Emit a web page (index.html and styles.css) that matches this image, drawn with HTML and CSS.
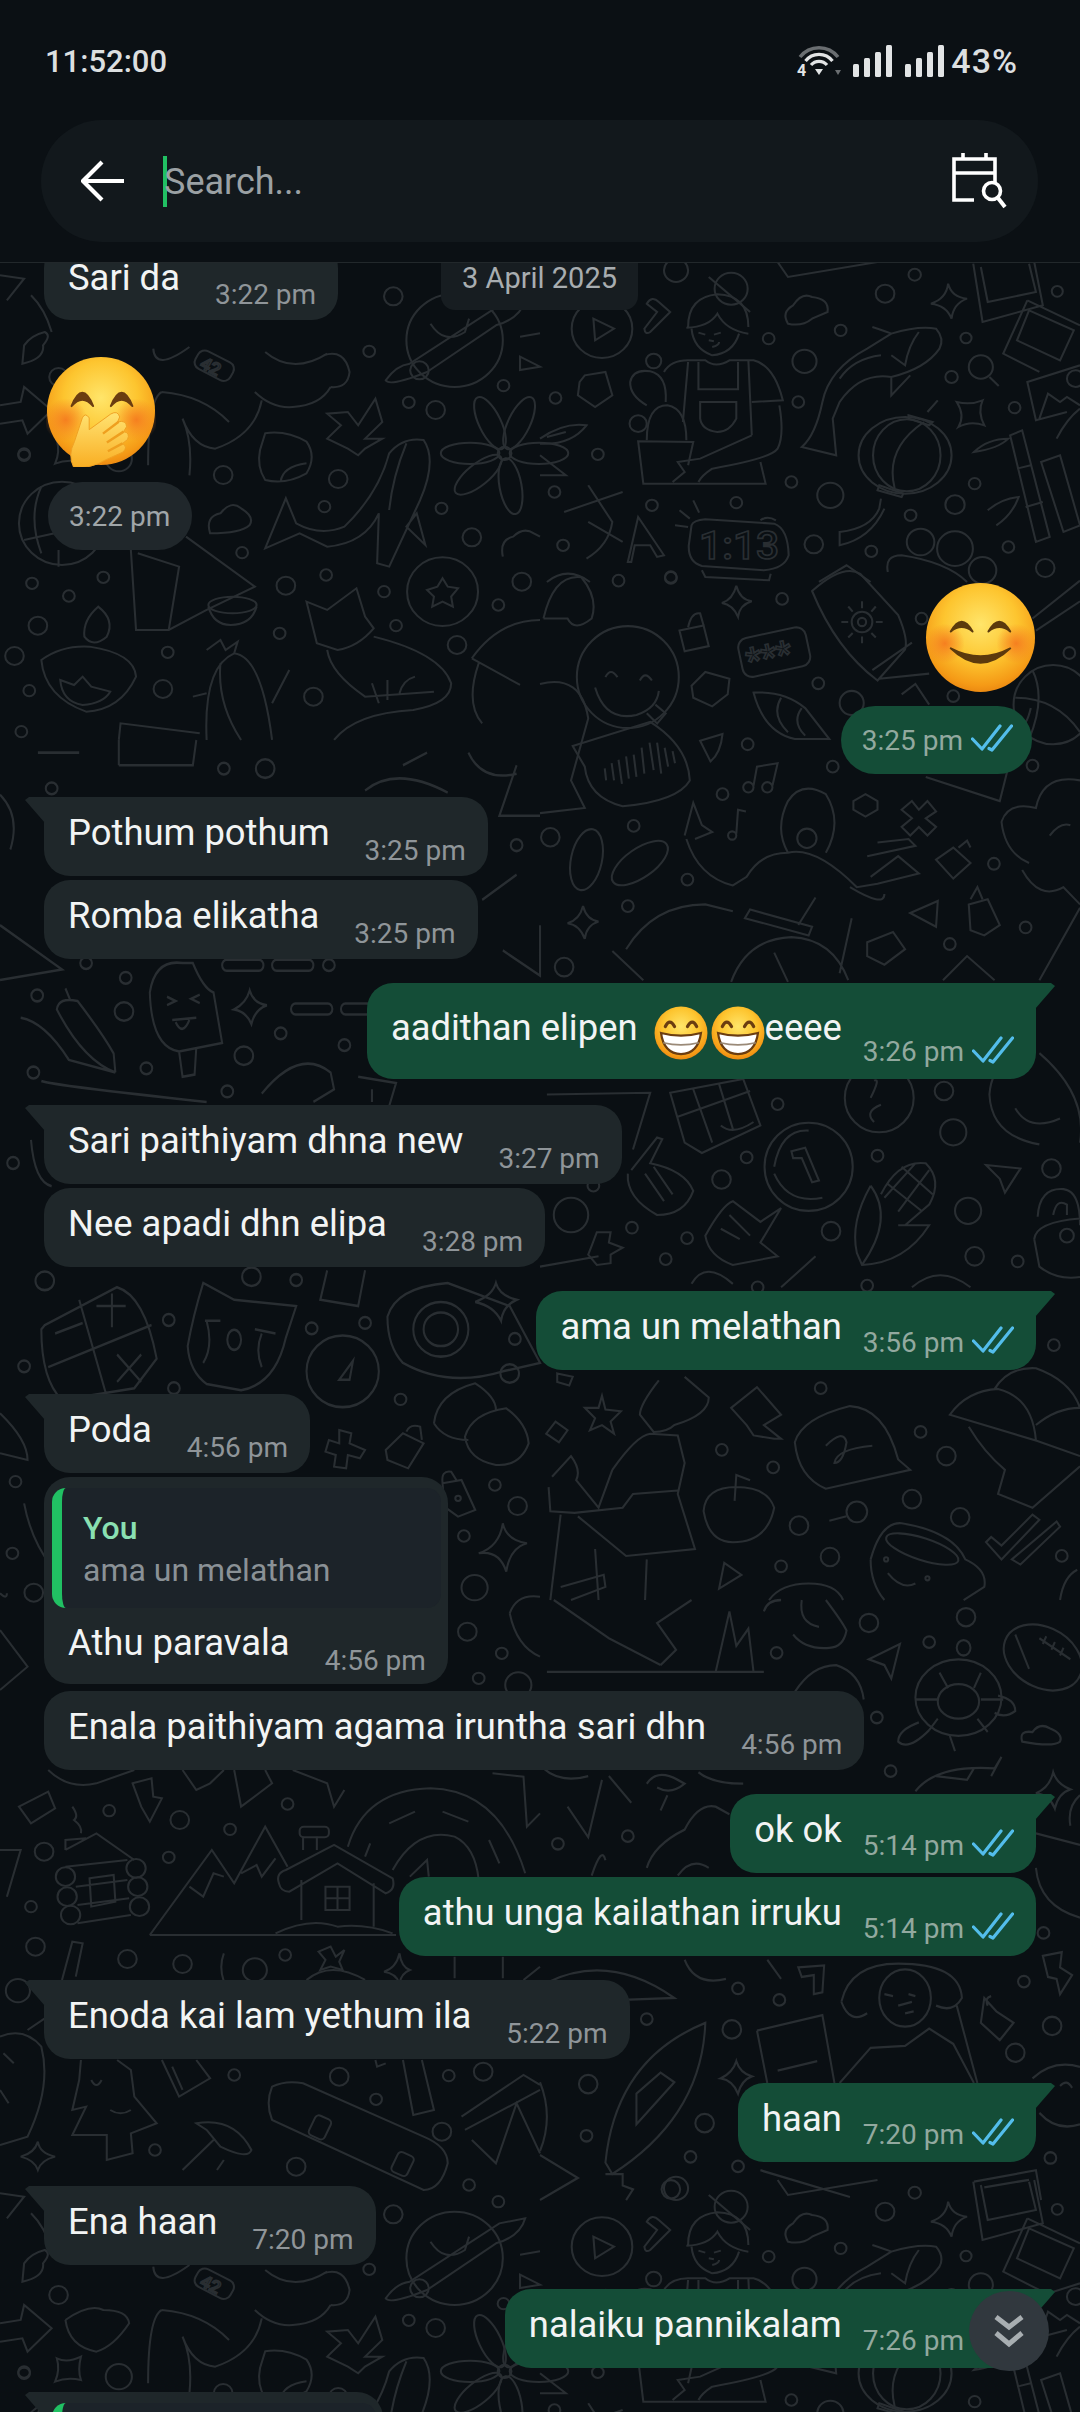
FILE: index.html
```html
<!DOCTYPE html>
<html>
<head>
<meta charset="utf-8">
<title>Chat search</title>
<link rel="stylesheet" href="styles.css">
</head>
<body>
<svg width="0" height="0" class="defs">
	<defs>
		<radialGradient id="faceFill" cx="50%" cy="38%" r="62%">
			<stop offset="0" stop-color="#ffe56a"/>
			<stop offset=".55" stop-color="#fdc52f"/>
			<stop offset=".9" stop-color="#f59a16"/>
			<stop offset="1" stop-color="#ec8a12"/>
		</radialGradient>
		<radialGradient id="blush" cx="50%" cy="50%" r="50%">
			<stop offset="0" stop-color="#f57c1f" stop-opacity=".95"/>
			<stop offset="1" stop-color="#f57c1f" stop-opacity="0"/>
		</radialGradient>
		<linearGradient id="handFill" x1="0" y1="0" x2="0" y2="1">
			<stop offset="0" stop-color="#ffe372"/>
			<stop offset="1" stop-color="#f9ae23"/>
		</linearGradient>
		<symbol id="ticks" viewBox="0 0 42 28">
			<path d="M1.5 15 L11 25 L29 2 M18 24.500 L21 26 L40.500 2" fill="none" stroke="#53bdeb" stroke-width="3.200" stroke-linecap="round" stroke-linejoin="round"/>
		</symbol>
		<symbol id="grin" viewBox="0 0 100 100">
			<circle cx="50" cy="50" r="49" fill="url(#faceFill)"/>
			<path d="M21 38 Q29 22 38 38 M62 38 Q71 22 79 38" fill="none" stroke="#6b3d10" stroke-width="6" stroke-linecap="round"/>
			<path d="M13 50 Q50 60 87 50 Q82 88 50 89 Q18 88 13 50 Z" fill="#fff" stroke="#6b3d10" stroke-width="4"/>
			<path d="M17 68 Q50 76 83 68" fill="none" stroke="#9a8a78" stroke-width="3"/>
		</symbol>
	</defs>
</svg>

<div class="phone">
	<header class="top">
		<div class="statusbar">
			<span class="clock">11:52:00</span>
			<div class="status-icons">
				<svg class="ic-wifi" width="45" height="32" viewBox="0 0 45 32">
					<path d="M3 12 A24 24 0 0 1 41 12" fill="none" stroke="#6a6e71" stroke-width="3.500"/>
					<path d="M8.500 16 A17 17 0 0 1 35.500 16" fill="none" stroke="#e2e4e5" stroke-width="3.200"/>
					<path d="M14 20 A10.500 10.500 0 0 1 30 20" fill="none" stroke="#e2e4e5" stroke-width="3.200"/>
					<path d="M18 24 L26 24 L22 30 Z" fill="#e2e4e5"/>
					<text class="wifi-four" x="0" y="31">4</text>
					<path d="M38 25 L44 25 L41 30 Z" fill="#6a6e71"/>
				</svg>
				<svg class="ic-signal" width="40" height="32" viewBox="0 0 40 32">
					<rect x="0" y="19" width="6" height="13" rx="1.500"/>
					<rect x="11" y="13" width="6" height="19" rx="1.500"/>
					<rect x="22" y="7" width="6" height="25" rx="1.500"/>
					<rect x="33" y="0" width="6" height="32" rx="1.500"/>
				</svg>
				<svg class="ic-signal" width="40" height="32" viewBox="0 0 40 32">
					<rect x="0" y="19" width="6" height="13" rx="1.500"/>
					<rect x="11" y="13" width="6" height="19" rx="1.500"/>
					<rect x="22" y="7" width="6" height="25" rx="1.500"/>
					<rect x="33" y="0" width="6" height="32" rx="1.500"/>
				</svg>
				<span class="battery">43%</span>
			</div>
		</div>
		<div class="searchbar">
			<svg class="back" width="44" height="42" viewBox="0 0 44 42">
				<path d="M43 21 H3 M21 2 L2 21 L21 40" fill="none" stroke="#fff" stroke-width="4.200"/>
			</svg>
			<span class="cursor"></span>
			<span class="placeholder">Search...</span>
			<svg class="calendar" width="56" height="56" viewBox="0 0 56 56">
				<path d="M11 0 V6 M34 0 V6 M2 20 H43 M43 30 V6 H2 V47 H22" fill="none" stroke="#fff" stroke-width="3.600"/>
				<circle cx="40" cy="38" r="8.500" fill="none" stroke="#fff" stroke-width="3.600"/>
				<path d="M46 45 L53 54" fill="none" stroke="#fff" stroke-width="4"/>
			</svg>
		</div>
	</header>

	<main class="chat">
		<svg class="wallpaper" width="1080" height="2149" viewBox="0 263 1080 2149">
			<g id="tile">
				<!-- top right, woman with cactus, koi, lantern -->
				<g transform="translate(540 262) scale(.3444 .3333)">
					<circle cx="395" cy="25" r="35"/><circle cx="1088" cy="38" r="18"/><circle cx="1002" cy="95" r="27"/><circle cx="1502" cy="88" r="16"/><circle cx="873" cy="205" r="17"/><circle cx="664" cy="230" r="17"/><circle cx="768" cy="298" r="35"/><circle cx="1237" cy="228" r="16"/><circle cx="1195" cy="345" r="18"/><circle cx="750" cy="420" r="17"/><circle cx="1378" cy="437" r="17"/><circle cx="45" cy="408" r="17"/><circle cx="168" cy="577" r="17"/><circle cx="42" cy="690" r="17"/><circle cx="730" cy="660" r="17"/><circle cx="843" cy="700" r="38"/><circle cx="1262" cy="665" r="17"/><circle cx="1205" cy="728" r="28"/><circle cx="325" cy="730" r="17"/><circle cx="570" cy="722" r="17"/><circle cx="1076" cy="760" r="17"/><circle cx="67" cy="850" r="17"/><circle cx="795" cy="847" r="27"/><circle cx="962" cy="868" r="17"/><circle cx="1360" cy="855" r="17"/><circle cx="1467" cy="918" r="27"/><circle cx="380" cy="945" r="17"/>
					<circle cx="180" cy="200" r="88"/><path d="M155 170 L215 200 L160 235 Z"/>
					<path d="M310 125 Q325 100 345 120 L378 150 L320 210 Q305 220 303 200 L340 150 Z"/>
					<circle cx="555" cy="80" r="48"/><path d="M490 45 L610 150"/>
					<path d="M430 195 Q430 105 515 97 Q605 100 605 195 M425 197 Q490 195 515 155 Q540 205 605 215 M440 200 Q445 260 500 280 Q560 275 578 215 M460 212 L480 218 M525 212 L505 218 M490 235 L505 238 M500 255 Q520 250 520 240"/>
					<path d="M360 330 Q380 295 430 295 L480 295 Q510 320 550 295 L620 295 Q680 310 705 415 L615 420 M430 300 L415 480 M605 295 L615 520 M460 300 L460 382 L575 382 L575 300 M465 420 L570 420 L570 470 Q550 510 515 510 Q470 505 465 470 Z M615 520 L465 590 L400 600 L420 630 L385 660 M695 430 Q710 520 690 560 Q670 590 500 620 Q470 640 460 660 M640 600 L655 665 L300 665 L285 538 L445 540 L430 610"/>
					<path d="M310 535 Q310 430 370 430 Q425 440 425 535 M310 430 Q260 400 262 360 Q270 320 320 328 Q370 340 365 420"/><circle cx="330" cy="297" r="22"/><circle cx="285" cy="485" r="25"/>
					<path d="M115 360 L130 340 L190 330 L210 400 L160 435 L110 400 Z M0 530 Q70 480 135 490 Q90 550 0 545 M20 525 L75 510 M0 580 L75 640 L0 640"/>
					<path d="M720 185 Q700 150 735 130 Q760 90 790 105 Q840 110 835 150 L790 170 Q760 195 720 185 Z"/>
					<path d="M1185 65 Q1195 105 1240 110 Q1200 125 1195 170 Q1180 130 1135 125 Q1180 110 1185 65 Z"/>
					<path d="M965 195 Q1010 210 1020 215 Q1100 190 1150 200 Q1175 230 1160 260 Q1120 320 1020 345 Q930 330 870 420 L850 470 L860 580 L760 555 Q800 520 820 420 Q840 320 950 260 L1020 215 M1100 210 Q1070 250 1060 310 L1020 280 M1020 345 L1020 400 L1075 340 M990 280 Q910 290 870 350"/>
					<ellipse cx="1060" cy="580" rx="135" ry="115"/><ellipse cx="1065" cy="580" rx="98" ry="108"/><path d="M1115 480 Q1000 560 1030 680 M1070 460 L1140 480 L1130 490 L1070 470 Z M1125 450 L1155 415 M985 670 L1055 695 L1050 705 L980 685 Z M985 740 Q960 800 870 810 L870 850 Q960 830 1000 740 M990 710 L985 740"/>
					<path d="M1258 5 L1285 180 L1460 130 L1435 0 M1280 15 L1300 120 L1440 90 L1420 5 M1415 115 L1568 190 M1415 115 L1345 275 L1450 330 M1420 145 L1550 205 L1510 295 L1385 235 Z"/>
					<circle cx="1280" cy="315" r="35"/><path d="M1305 345 L1332 372"/>
					<path d="M1210 420 Q1250 430 1285 415 Q1270 450 1290 490 Q1250 475 1215 495 Q1235 460 1210 420 Z"/>
					<path d="M1568 310 L1415 360 L1440 475 L1530 450 M1450 470 L1475 395 L1510 420 L1530 405 L1568 430"/><circle cx="1555" cy="350" r="25"/>
					<path d="M1365 520 L1400 505 L1480 825 L1440 840 Z M1385 620 L1425 610 M1410 735 L1460 720 M1455 600 L1510 580 L1568 790 L1520 810 Z M1260 570 Q1300 530 1360 530 Q1330 560 1260 570 Z M1300 745 Q1340 710 1390 705 Q1370 760 1325 790 M1500 530 Q1530 470 1568 440"/>
					<path d="M70 750 L240 690 M140 670 L210 780 Q200 850 135 890 M140 780 L240 840 M255 900 L285 765 L360 880 L340 885 L320 850 L275 850 L265 900 Z"/>
					<path d="M440 790 Q445 775 480 772 L680 785 Q720 800 722 880 Q710 920 650 925 L470 912 Q430 900 432 850 Z M405 745 L435 770 M445 715 L462 752 M392 790 L430 795 M640 775 Q660 760 685 775 M470 925 L480 945 L665 955 L670 935"/>
					<text class="doodle-text" x="462" y="892" font-size="118">1:13</text>
					<circle cx="1105" cy="840" r="40"/><circle cx="1205" cy="860" r="52"/><circle cx="1285" cy="925" r="40"/>
					<path d="M1010 930 Q1000 880 1050 880 Q1180 900 1240 960 M810 960 L890 910 L960 960 M690 0 L720 45 L980 0 M20 960 Q80 910 145 960"/>
				</g>

				<!-- left column, planet and heart band -->
				<g transform="translate(0 232) scale(.3444 .3333)">
					<circle cx="1142" cy="193" r="27"/><circle cx="1072" cy="358" r="17"/><circle cx="1362" cy="105" r="17"/><circle cx="1447" cy="155" r="17"/><circle cx="170" cy="435" r="27"/>
					<circle cx="1320" cy="325" r="140"/><path d="M1120 445 Q1150 400 1190 395 L1450 220 L1525 205 Q1510 260 1440 280 L1240 420 Q1130 465 1120 445 Z M1250 275 Q1290 340 1350 300 L1362 260"/><circle cx="1218" cy="415" r="27"/>
					<path d="M70 340 Q90 310 130 300 Q150 310 125 340 Q130 380 65 395 Z M90 190 Q130 230 150 300 M190 510 Q260 460 300 480 Q370 480 375 520 Q330 590 280 605 Q200 590 190 510 M0 520 L60 510 L70 465 L150 535 L80 605 L65 565 L0 575 M0 130 L70 140 L20 205"/>
					<path d="M165 625 Q195 640 235 620 Q225 660 235 690 Q195 680 160 695 Q175 660 165 625 Z"/><circle cx="345" cy="680" r="38"/><circle cx="70" cy="670" r="17"/>
					<rect x="565" y="370" width="115" height="60" rx="22" transform="rotate(28 620 400)"/>
					<text class="doodle-text" x="585" y="425" font-size="52" transform="rotate(28 620 400)">42</text>
					<path d="M770 360 Q850 430 950 365 M940 370 Q1000 350 1015 420 Q1010 470 960 465 M470 480 Q430 500 430 700 M470 480 Q590 490 665 570 M740 480 Q790 530 850 525 Q930 520 960 465 M760 505 Q740 610 625 650 Q560 645 530 560 M530 560 Q560 630 550 730 M445 350 Q450 420 550 345 M1010 540 L1040 580 L1090 500 L1110 570 L1060 620 L1110 620 L1060 650 L1040 670 L1010 650 L950 620 L990 580 L950 545 Z"/>
				</g>

				<!-- left column, whale, flower, fox -->
				<g transform="translate(0 320) scale(.3444 .3333)">
					<circle cx="1462" cy="197" r="17"/><circle cx="1187" cy="247" r="17"/><circle cx="1265" cy="270" r="27"/><circle cx="648" cy="465" r="27"/><circle cx="982" cy="477" r="27"/><circle cx="942" cy="560" r="17"/><circle cx="1282" cy="565" r="17"/><circle cx="70" cy="402" r="17"/><circle cx="93" cy="790" r="17"/><circle cx="300" cy="772" r="17"/><circle cx="200" cy="828" r="17"/><circle cx="110" cy="917" r="27"/><circle cx="42" cy="1008" r="27"/><circle cx="703" cy="698" r="17"/><circle cx="830" cy="797" r="27"/><circle cx="947" cy="765" r="17"/><circle cx="1115" cy="815" r="17"/><circle cx="1370" cy="652" r="27"/><circle cx="1515" cy="785" r="27"/><circle cx="1447" cy="855" r="17"/><circle cx="1150" cy="917" r="17"/><circle cx="812" cy="940" r="17"/><circle cx="1327" cy="975" r="27"/><circle cx="487" cy="997" r="17"/><circle cx="85" cy="1112" r="17"/><circle cx="473" cy="1107" r="27"/><circle cx="910" cy="1130" r="27"/><circle cx="62" cy="1235" r="17"/>
					<path d="M770 340 Q830 330 890 365 Q920 410 890 460 Q830 495 770 480 Q745 440 755 390 Z M815 485 Q820 440 890 430"/>
					<path d="M770 685 L830 535 L860 610 Q930 650 1000 620 Q1100 520 1130 400 Q1170 350 1230 360 Q1270 420 1220 540 L1130 740 L1095 730 L1100 580 Q1060 670 950 680 L870 640 Z M1180 370 Q1140 470 1130 570 M1180 620 L1210 580 L1235 675 Z"/>
					<circle cx="1465" cy="400" r="20"/>
					<ellipse cx="1465" cy="300" rx="32" ry="85" transform="rotate(25 1465 400)"/><ellipse cx="1465" cy="300" rx="32" ry="85" transform="rotate(-25 1465 400)"/><ellipse cx="1465" cy="300" rx="32" ry="85" transform="rotate(-90 1465 400)"/><ellipse cx="1465" cy="300" rx="32" ry="85" transform="rotate(-130 1465 400)"/><ellipse cx="1465" cy="300" rx="32" ry="85" transform="rotate(170 1465 400)"/><ellipse cx="1465" cy="300" rx="32" ry="85" transform="rotate(90 1465 400)"/>
					<circle cx="180" cy="610" r="125"/><path d="M120 500 Q80 590 120 700 M70 660 L290 610 M170 740 L170 690"/>
					<path d="M380 690 L395 930 L490 930 L600 870 L740 800 L540 650 M400 700 L520 740 L490 930"/><ellipse cx="675" cy="855" rx="70" ry="25"/><path d="M605 860 Q620 915 670 915 Q730 915 745 860"/>
					<path d="M120 1020 Q180 975 260 980 Q390 1000 395 1070 Q350 1170 250 1175 Q130 1130 120 1020 Z M285 860 Q240 900 245 950 Q270 985 310 950 Q335 900 285 860 Z M175 1080 L215 1095 L240 1070 L265 1100 L320 1115 Q300 1150 240 1155 Q180 1145 175 1080 Z"/>
					<path d="M600 1260 Q590 1040 680 1000 Q760 1010 790 1260 M640 1030 Q630 1150 700 1260 M790 1150 L840 1050 M600 990 L640 960 L655 990 L690 965 L680 1000 M560 1130 L600 1120 M345 1260 L350 1210 L580 1240"/>
					<path d="M890 845 L950 870 L1035 805 L1060 890 L1085 925 Q1040 980 980 990 L920 970 Z M1085 950 Q1280 1000 1310 1090 Q1310 1150 1200 1170 Q1030 1180 970 1260 M950 990 Q960 1060 1060 1130 L1260 1115 M1125 1080 L1125 1140 M1080 1090 L1100 1150 M1160 1120 Q1170 1080 1205 1070"/>
					<circle cx="1285" cy="815" r="103"/><path d="M1285 775 L1300 800 L1330 805 L1310 830 L1315 860 L1285 845 L1255 860 L1260 830 L1240 810 L1270 800 Z"/>
					<path d="M610 640 Q595 590 640 580 Q670 540 700 565 Q740 590 725 615 Q700 640 610 640 Z M1460 710 Q1450 660 1490 650 Q1520 620 1550 640 L1568 650"/>
					<path d="M1370 1015 Q1450 900 1568 900 M1370 1015 L1510 1095 M1390 1030 Q1350 1150 1400 1210 M1510 50 L1568 40 M1510 110 L1568 140 L1510 150 Z"/>
				</g>

				<!-- right column, smiley, shell, sunscreen -->
				<g transform="translate(540 560) scale(.3444)">
					<circle cx="228" cy="60" r="17"/><circle cx="380" cy="52" r="17"/><circle cx="703" cy="113" r="17"/><circle cx="1108" cy="170" r="17"/><circle cx="808" cy="358" r="17"/><circle cx="603" cy="535" r="17"/><circle cx="850" cy="600" r="17"/><circle cx="530" cy="680" r="17"/><circle cx="272" cy="772" r="17"/><circle cx="30" cy="805" r="27"/><circle cx="428" cy="928" r="17"/><circle cx="255" cy="1005" r="17"/><circle cx="1318" cy="882" r="17"/><circle cx="1410" cy="1067" r="17"/><circle cx="1190" cy="1115" r="17"/><circle cx="70" cy="1182" r="27"/><circle cx="1200" cy="395" r="17"/><circle cx="1430" cy="597" r="17"/><circle cx="1537" cy="270" r="17"/><circle cx="905" cy="415" r="35"/>
					<circle cx="255" cy="340" r="148"/><path d="M160 370 Q190 470 280 450 Q340 430 345 380 M190 340 Q205 310 225 340 M290 350 Q305 320 325 350 M310 445 L340 475 L365 445 L335 420"/>
					<path d="M95 540 L320 470 Q430 540 435 640 Q400 700 240 715 Q140 690 130 600 Z M188 605 L192 640 M208 590 L215 640 M228 580 L238 650 M250 570 L258 635 M272 565 L280 630 M295 545 L303 620 M318 530 L330 610 M340 530 L352 620 M362 545 L372 600 M385 555 L392 590"/>
					<path d="M570 75 Q580 115 615 120 Q580 130 575 165 Q560 130 528 125 Q560 115 570 75 Z"/>
					<path d="M405 205 L475 190 L490 250 L420 265 Z M430 195 Q440 150 465 155 L475 190"/>
					<rect x="580" y="210" width="200" height="115" rx="28" transform="rotate(-12 680 267)"/>
					<text class="doodle-text" x="596" y="312" font-size="100" transform="rotate(-12 680 267)">***</text>
					<path d="M620 385 Q710 380 770 430 L840 520 L740 520 Q650 500 620 385 Z M700 400 Q670 450 720 500 M760 430 Q730 470 770 510 M440 365 L480 325 L550 345 L545 390 L500 425 L445 400 Z"/>
					<path d="M790 90 Q880 10 930 40 L1040 160 Q1070 230 1060 260 L980 350 Q860 260 790 90 Z M965 320 L1080 240 M985 345 L1130 330"/><circle cx="935" cy="180" r="30"/><circle cx="935" cy="180" r="12"/><path d="M935 120 V140 M895 135 L908 150 M975 135 L962 150 M875 180 H895 M975 180 H995 M895 225 L908 212 M975 225 L962 212 M935 222 V242"/>
					<circle cx="1490" cy="420" r="115"/><path d="M1380 400 Q1500 400 1568 500 M1430 320 Q1470 400 1420 520 M1430 170 L1568 60 M1440 205 L1568 120 M1050 390 L1090 360 L1130 420"/>
					<path d="M465 525 L530 505 Q525 560 495 585 Z"/>
					<circle cx="605" cy="660" r="15"/><circle cx="660" cy="660" r="15"/><path d="M620 655 L630 600 L690 590 L675 655"/><circle cx="558" cy="800" r="12"/><path d="M570 795 L575 725 L598 730"/>
					<path d="M420 800 L445 705 L470 770 L500 790 L450 810 M425 810 Q460 920 560 945 L600 920 Q640 850 720 850 Q800 830 920 950 L980 940 L1100 910 L1040 860 L960 920 M950 860 L1090 830 L1070 810 L980 820 M900 950 Q1000 1010 1000 970"/>
					<path d="M720 850 Q680 780 720 700 Q760 640 830 680 Q880 760 830 850"/><circle cx="775" cy="808" r="28"/>
					<ellipse cx="135" cy="870" rx="45" ry="90" transform="rotate(12 135 870)"/><ellipse cx="290" cy="880" rx="95" ry="42" transform="rotate(-35 290 880)"/>
					<path d="M945 680 L980 700 L980 725 L945 745 L910 725 L910 700 Z"/>
					<path d="M1080 700 L1100 725 L1125 700 L1150 730 L1120 750 L1150 775 L1125 800 L1100 775 L1075 800 L1050 775 L1080 750 L1050 725 Z"/>
					<path d="M1150 870 L1200 835 L1250 880 L1200 925 Z M1215 835 L1240 815 L1250 835"/>
					<path d="M1245 1000 L1300 985 L1335 1060 L1290 1090 L1250 1075 Z M1250 985 L1270 950 L1285 985"/>
					<path d="M1075 1025 L1155 990 L1150 1065 Z M950 1110 L1025 1080 L1060 1130 L1000 1175 L950 1150 Z"/>
					<path d="M125 1005 Q135 1045 170 1050 Q135 1060 130 1100 Q115 1060 80 1055 Q115 1045 125 1005 Z"/>
					<path d="M1340 760 Q1360 700 1440 720 Q1460 620 1568 640 M1400 900 Q1450 990 1520 950 L1568 1000 M1340 760 Q1350 850 1420 880 M1480 800 Q1510 760 1540 770"/>
					<path d="M250 1130 Q330 1000 480 1000 L560 1020 M210 1135 L300 1220 M555 1225 Q600 1100 730 1095 Q850 1100 895 1220 M680 1140 L720 1225 M595 1040 L780 1090 L790 1065 L610 1015 Z M800 980 L750 1060 M870 1200 L905 1040 M1170 1220 L1240 1150 L1320 1220 M1450 1220 L1568 1010"/>
					<path d="M0 360 Q120 330 140 460 L90 640 L130 720 L0 735 M10 170 Q40 40 120 50 Q170 110 150 170 Q100 210 80 170 L10 170 M1120 630 L1335 700 L1360 600 M1340 430 Q1400 540 1425 430"/>
				</g>

				<!-- left column, ice lolly, calculator, cat -->
				<g transform="translate(0 740) scale(.3444 .4209)">
					<ellipse cx="650" cy="68" rx="17" ry="14"/><ellipse cx="150" cy="115" rx="17" ry="14"/><ellipse cx="365" cy="565" rx="17" ry="14"/><ellipse cx="108" cy="607" rx="17" ry="14"/><ellipse cx="250" cy="530" rx="17" ry="14"/><ellipse cx="955" cy="535" rx="17" ry="14"/><ellipse cx="815" cy="697" rx="17" ry="14"/><ellipse cx="1000" cy="725" rx="17" ry="14"/><ellipse cx="425" cy="780" rx="17" ry="14"/><ellipse cx="97" cy="790" rx="17" ry="14"/><ellipse cx="660" cy="835" rx="17" ry="14"/><ellipse cx="38" cy="1005" rx="17" ry="14"/><ellipse cx="490" cy="1378" rx="17" ry="14"/><ellipse cx="905" cy="1398" rx="17" ry="14"/><ellipse cx="1060" cy="1385" rx="17" ry="14"/><ellipse cx="860" cy="1283" rx="17" ry="14"/><ellipse cx="1495" cy="1423" rx="17" ry="14"/><ellipse cx="70" cy="1488" rx="17" ry="14"/><ellipse cx="505" cy="1540" rx="17" ry="14"/><ellipse cx="1500" cy="250" rx="17" ry="14"/>
					<ellipse cx="770" cy="68" rx="27" ry="22"/><ellipse cx="360" cy="645" rx="27" ry="22"/><ellipse cx="708" cy="750" rx="27" ry="22"/><ellipse cx="130" cy="1285" rx="27" ry="22"/><ellipse cx="730" cy="1275" rx="27" ry="22"/><ellipse cx="1480" cy="1505" rx="27" ry="22"/>
					<path d="M435 600 Q450 520 530 530 L560 530 Q590 590 620 600 L645 720 L520 740 Q440 730 435 600 Z M520 740 L530 800 L565 795 L570 730 M485 610 L510 620 L485 630 M580 605 L555 615 L580 625 M500 665 L570 660 M510 670 Q530 705 550 665"/>
					<path d="M725 595 Q735 625 775 630 Q740 640 730 675 Q715 645 680 640 Q715 625 725 595 Z"/>
					<rect x="645" y="522" width="120" height="26" rx="13"/><rect x="790" y="522" width="120" height="26" rx="13"/><rect x="845" y="626" width="120" height="26" rx="13"/><rect x="990" y="626" width="90" height="26" rx="13"/>
					<path d="M60 660 Q130 670 200 760 L335 790 Q240 760 165 640 Q170 610 225 620 Q300 700 330 745 L335 790 M190 590 L205 620"/>
					<path d="M760 840 Q870 730 960 790 L970 830 L910 860 M1040 800 L1150 815 L1130 870 M1080 830 V860 M120 810 Q150 820 600 860 M90 950 Q100 1050 150 1060 M0 440 L180 545 L0 570 M0 130 Q60 180 30 260"/>
					<path d="M130 1390 L340 1300 Q420 1320 455 1470 L390 1540 L180 1568 Q120 1520 120 1400 Z M230 1330 L310 1560 M140 1490 L440 1390 M160 1410 L240 1385 M280 1345 L365 1345 M325 1315 V1395 M340 1460 L410 1525 M410 1460 L340 1525"/>
					<path d="M545 1440 Q560 1370 590 1290 L680 1330 L860 1345 L830 1420 Q800 1530 700 1545 L600 1530 Q550 1500 545 1440 Z M595 1380 L640 1380 M600 1380 Q620 1440 590 1480 M740 1400 L800 1410 M760 1410 Q740 1450 760 1490"/><ellipse cx="680" cy="1425" rx="20" ry="24"/>
					<ellipse cx="995" cy="1500" rx="105" ry="85"/><path d="M985 1520 L1025 1475 L1015 1520 Z"/>
					<path d="M1125 1370 Q1150 1300 1300 1290 L1480 1345 L1568 1480 L1460 1500 Q1300 1540 1170 1480 Q1125 1440 1125 1370 Z"/><ellipse cx="1280" cy="1400" rx="80" ry="65"/><ellipse cx="1280" cy="1400" rx="50" ry="40"/><path d="M1440 1290 Q1450 1320 1500 1330 Q1460 1345 1455 1380 Q1435 1345 1380 1335 Q1430 1320 1440 1290 Z"/>
					<path d="M950 1260 L930 1330 L1040 1345 L1060 1260"/>
					<path d="M1360 30 Q1400 100 1500 80 M1500 60 L1450 180 L1568 180 M1170 60 L1240 30 M1060 120 Q1150 60 1300 125 M345 60 L560 60 L570 0 M345 60 L345 0 M110 30 L230 30 M1400 380 L1500 320 M1460 500 L1568 560 L1568 440"/>
				</g>

				<!-- right column, corn, reading boy, cup -->
				<g transform="translate(540 1060) scale(.3444)">
					<circle cx="690" cy="128" r="17"/><circle cx="1173" cy="90" r="27"/><circle cx="1200" cy="210" r="38"/><circle cx="600" cy="283" r="17"/><circle cx="980" cy="278" r="17"/><circle cx="527" cy="347" r="27"/><circle cx="845" cy="497" r="27"/><circle cx="267" cy="487" r="17"/><circle cx="427" cy="517" r="17"/><circle cx="365" cy="578" r="17"/><circle cx="1243" cy="438" r="38"/><circle cx="1485" cy="315" r="27"/><circle cx="1262" cy="570" r="27"/><circle cx="1387" cy="585" r="17"/><circle cx="950" cy="655" r="17"/><circle cx="632" cy="660" r="17"/><circle cx="815" cy="953" r="17"/><circle cx="1105" cy="1080" r="17"/><circle cx="1180" cy="1150" r="27"/><circle cx="528" cy="1132" r="17"/><circle cx="677" cy="1183" r="17"/><circle cx="1080" cy="1275" r="27"/><circle cx="1220" cy="1328" r="27"/><circle cx="752" cy="1352" r="27"/><circle cx="842" cy="1443" r="27"/><circle cx="700" cy="1470" r="17"/><circle cx="1515" cy="1440" r="17"/><circle cx="1492" cy="828" r="17"/><circle cx="155" cy="365" r="17"/><circle cx="90" cy="450" r="50"/>
					<path d="M378 95 L590 55 L640 190 L470 270 L420 240 Z M400 165 L610 90 M445 85 L500 240 M520 70 L560 200 M525 190 Q560 220 620 180"/>
					<circle cx="985" cy="110" r="100"/><path d="M960 110 Q990 50 970 60 M990 130 Q940 150 970 180 M1450 245 Q1310 220 1305 100 Q1310 30 1360 0 M1380 140 Q1420 210 1510 170 M1568 240 Q1590 100 1450 -20"/>
					<path d="M265 320 L340 225 L355 230 L320 300 Q420 320 445 380 Q420 450 340 450 Q250 400 255 330 M330 310 L385 390 M305 330 L360 410"/>
					<circle cx="780" cy="310" r="128"/><path d="M680 310 Q700 200 780 205 M820 400 Q720 420 680 330 M730 265 L770 255 L810 350 L790 355 L760 285 L735 285 Z"/>
					<path d="M480 510 Q530 420 560 410 L640 470 L700 430 L640 530 L690 570 L560 595 Q490 570 480 510 Z M550 450 L610 510 M525 490 L580 520"/>
					<path d="M960 365 Q900 470 920 560 L935 595 Q1060 590 1130 480 L1040 480 M990 390 Q1040 290 1120 300 Q1170 350 1130 420 L1060 480 M1010 360 L1110 440 M1050 310 L1140 390 M1090 300 L1000 400 M1130 320 L1040 440 M960 365 Q1030 460 935 595"/>
					<path d="M1295 305 L1395 315 L1350 385 L1335 345 Z"/>
					<path d="M1445 455 Q1450 370 1520 375 Q1568 380 1568 480 M1435 520 Q1440 470 1568 460 M1435 520 L1450 600 Q1500 640 1568 630 M1490 450 Q1500 400 1530 420 L1530 450"/><circle cx="1530" cy="510" r="20"/>
					<path d="M150 540 L165 500 L205 500 L200 530 L240 545 L205 565 L205 590 L165 595 L140 565 Z M0 600 L170 570 M20 100 L320 95 L270 260 M700 660 L800 570 M1080 660 Q1160 590 1250 660 M440 650 Q480 580 560 650"/>
					<path d="M345 930 Q290 1000 290 1030 L330 1080 Q370 1080 390 1060 Q490 1030 490 980 L420 920 M210 1190 Q280 1090 320 1085 L400 1090 L420 1170 L400 1260 L450 1420 L250 1440 L110 1325 M35 1210 L90 1150 Q120 1190 105 1220 L170 1300 L210 1190 M25 1240 L30 1310 L100 1315 L240 1300 L270 1260 L400 1250 M60 1320 L30 1568 M160 1420 L170 1568 M310 1450 L305 1568 M60 1530 L185 1495 L190 1530 L90 1568"/>
					<path d="M180 975 L190 1015 L235 1020 L205 1050 L215 1085 L180 1060 L145 1075 L160 1040 L130 1010 L170 1010 Z M45 1050 L80 1075 L55 1110 L18 1085 Z M50 910 L95 920 L85 945 L50 935 Z"/>
					<path d="M555 1010 L630 950 L700 1030 L650 1060 L700 1100 L680 1100 L620 1090 L600 1060 Z"/>
					<path d="M740 1110 Q760 1040 900 1005 Q1000 1010 1040 1160 L1075 1190 L830 1245 Q750 1210 740 1110 Z M830 1120 Q880 1070 890 1110 Q880 1170 855 1170 Q860 1130 965 1120"/>
					<path d="M570 1240 Q480 1240 475 1310 Q490 1400 560 1400 Q660 1400 680 1300 Q660 1240 570 1240 Z M565 1280 L570 1205 L610 1220"/><circle cx="920" cy="1312" r="30"/><path d="M840 1338 L890 1325"/>
					<path d="M1190 1030 Q1240 960 1330 955 Q1430 980 1440 1105 Z M1320 955 Q1360 890 1440 895 Q1540 930 1568 1010 M1440 1060 Q1500 1010 1568 1010 M1440 1105 L1568 1150 M1245 1065 Q1290 1140 1350 1190 L1330 1260 L1430 1300 L1568 1180"/>
					<path d="M1295 1400 L1340 1450 L1450 1335 L1430 1320 L1340 1410 L1310 1385 Z M1370 1450 L1500 1340 L1510 1355 L1395 1465 Z"/>
					<path d="M960 1450 Q990 1340 1050 1345 Q1200 1370 1235 1450 Q1300 1480 1290 1530 L1230 1568 M960 1450 Q960 1520 1000 1568 M1010 1490 Q1050 1540 1090 1520"/><ellipse cx="1110" cy="1420" rx="110" ry="32" transform="rotate(18 1110 1420)"/><circle cx="1005" cy="1450" r="6"/><circle cx="1125" cy="1505" r="6"/>
					<path d="M535 1460 L585 1495 L520 1535 Z M665 1568 Q700 1520 780 1520 Q860 1520 880 1568 M1510 1568 Q1520 1500 1560 1480"/>
				</g>

				<!-- middle left, dumplings and locks -->
				<g transform="translate(0 1380) scale(.3444 .3333)">
					<circle cx="1163" cy="58" r="17"/><circle cx="1437" cy="315" r="17"/><circle cx="1503" cy="378" r="27"/><circle cx="1347" cy="468" r="17"/><circle cx="1378" cy="623" r="38"/><circle cx="1357" cy="755" r="27"/><circle cx="1457" cy="820" r="17"/><circle cx="1390" cy="895" r="17"/><circle cx="1505" cy="915" r="38"/><circle cx="45" cy="305" r="17"/><circle cx="36" cy="520" r="17"/><circle cx="98" cy="638" r="27"/>
					<path d="M1260 130 Q1270 40 1380 10 Q1440 50 1440 90 M1350 170 Q1370 100 1470 85 Q1530 130 1535 190 Q1510 260 1440 255 Q1360 240 1350 170 Z M1360 180 Q1290 180 1260 130"/>
					<path d="M985 150 L1020 160 L1015 190 L1060 210 L1045 235 L1010 225 L1005 265 L970 260 L975 225 L945 215 L955 180 L985 190 Z"/>
					<path d="M1120 210 L1170 160 L1230 190 L1185 265 L1125 240 Z M1180 155 Q1190 130 1220 140 L1225 180"/>
					<path d="M1285 310 L1340 300 L1380 390 L1330 410 L1290 380 Z M1285 310 Q1280 270 1310 275 L1325 300"/><circle cx="1330" cy="355" r="8"/>
					<path d="M1460 430 Q1470 480 1530 490 Q1480 505 1470 575 Q1450 510 1390 520 Q1450 500 1460 430 Z M1480 700 Q1500 640 1568 650 M1480 700 Q1500 800 1568 830 M0 100 Q80 180 80 240 L0 220 M0 750 L80 860 L0 930 M70 370 Q90 480 150 560 M0 640 Q20 660 20 640"/>
				</g>

				<!-- right column, turtle, surfboard, woman with book -->
				<g transform="translate(540 1600) scale(.3444 .3827)">
					<ellipse cx="955" cy="60" rx="27" ry="24"/><ellipse cx="1237" cy="45" rx="27" ry="24"/><ellipse cx="687" cy="138" rx="17" ry="15"/><ellipse cx="1130" cy="110" rx="17" ry="15"/><ellipse cx="978" cy="307" rx="17" ry="15"/><ellipse cx="1018" cy="447" rx="17" ry="15"/><ellipse cx="52" cy="637" rx="17" ry="15"/><ellipse cx="255" cy="617" rx="17" ry="15"/><ellipse cx="575" cy="1015" rx="17" ry="15"/><ellipse cx="695" cy="1045" rx="17" ry="15"/><ellipse cx="310" cy="1095" rx="17" ry="15"/><ellipse cx="557" cy="1122" rx="27" ry="24"/><ellipse cx="140" cy="1265" rx="27" ry="24"/><ellipse cx="135" cy="1400" rx="17" ry="15"/><ellipse cx="478" cy="1367" rx="27" ry="24"/><ellipse cx="437" cy="1455" rx="17" ry="15"/><ellipse cx="575" cy="1480" rx="17" ry="15"/><ellipse cx="1405" cy="997" rx="17" ry="15"/><ellipse cx="1487" cy="1113" rx="27" ry="24"/><ellipse cx="1380" cy="1183" rx="27" ry="24"/><ellipse cx="1482" cy="1458" rx="17" ry="15"/><ellipse cx="380" cy="1540" rx="27" ry="24"/><ellipse cx="1462" cy="870" rx="17" ry="15"/>
					<path d="M20 188 L650 188 M510 188 L550 30 L570 120 L605 75 L620 188 M350 170 L395 130 L340 60 L440 0 M40 0 L200 100 L350 170"/>
					<path d="M955 155 L1045 115 L1020 205 L1000 170 Z M650 30 Q660 0 700 0 M760 0 Q750 60 810 70 M830 0 Q880 60 890 80 Q880 125 840 125 Q770 130 735 90"/>
					<ellipse cx="1215" cy="255" rx="125" ry="100"/><ellipse cx="1215" cy="265" rx="60" ry="45"/><circle cx="1230" cy="125" r="20"/><path d="M1160 190 L1185 230 M1280 190 L1260 230 M1155 310 L1130 340 M1270 310 L1300 345 M1090 260 L1155 260 M1280 260 L1345 260 M1100 320 Q1040 340 1040 370 Q1070 395 1130 340 M1330 250 Q1380 260 1380 290 Q1350 310 1320 295 M1190 355 L1205 395"/>
					<ellipse cx="1460" cy="150" rx="118" ry="80" transform="rotate(22 1460 150)"/><path d="M1450 100 L1540 155 M1470 95 L1460 115 M1495 110 L1485 130 M1520 125 L1510 145 M1380 90 L1420 180"/>
					<path d="M1400 370 Q1390 340 1430 345 Q1450 320 1480 335 Q1520 350 1510 370 Q1490 385 1400 370 Z"/>
					<path d="M1090 500 Q1150 430 1320 440 L1340 410 L1310 460 M1260 440 L1240 470 L1150 460 M1490 450 Q1500 480 1540 495 Q1505 505 1495 545 Q1480 510 1440 505 Q1480 490 1490 450 Z M1440 610 L1568 640 M1440 700 Q1450 800 1568 830 M1568 510 Q1530 540 1540 590"/>
					<path d="M740 240 Q790 170 860 170 Q930 190 940 260 M180 470 L140 620 L80 540 M200 460 L265 530 M10 440 Q60 480 140 460 M310 480 Q340 440 400 470 L420 480 Q380 510 340 490 M460 450 Q500 480 590 480 M350 550 L370 510"/>
					<path d="M310 700 Q330 640 420 600 Q460 530 510 540 L550 560 M150 720 Q180 640 190 680 M400 720 Q440 670 490 700 M20 1000 Q200 920 390 1040 L240 1045 M420 940 Q450 1010 540 990 M660 940 L700 990 M750 960 L825 955 L820 1025 L795 1030 L795 980 L760 985 Z"/>
					<path d="M190 1470 Q220 1200 480 1105 Q470 1350 210 1500 Z M280 1290 L350 1235 L390 1260 L340 1310 L280 1370 Z M0 1260 Q40 1350 0 1440 M0 1450 L110 1510 L0 1568"/>
					<circle cx="1060" cy="1040" r="75"/><path d="M875 1050 Q900 950 1040 950 Q1220 950 1225 1040 Q1200 1080 1150 1060 M875 1050 Q900 1110 950 1080 M630 1125 L820 1085 L855 1262 M630 1125 L660 1262 M690 1230 L805 1205 M870 1262 L960 1170 L1060 1165 L1130 1120 L1200 1160 L1260 1262 M1210 1060 L1270 1262 M1000 1030 L1025 1035 M1070 1030 L1090 1035 M1040 1060 L1080 1050 M1060 1080 L1085 1075"/>
					<path d="M570 1205 Q580 1235 615 1245 Q585 1255 575 1290 Q560 1255 525 1250 Q560 1235 570 1205 Z"/>
					<path d="M1290 1040 L1325 1075 L1375 1105 L1335 1150 L1280 1105 Z M1300 1060 Q1290 1040 1310 1035"/>
					<path d="M1460 930 L1515 920 L1510 960 L1545 980 L1510 1030 L1500 990 L1475 985 Z"/>
					<path d="M640 1490 L900 1560 M1260 1520 L1440 1490 L1455 1568 M1290 1535 L1420 1515 M190 1500 L240 1500 L240 1530 L270 1540 L250 1568 M1430 1250 Q1490 1200 1568 1220 M1450 1340 Q1500 1390 1568 1370 M1510 1270 Q1530 1250 1545 1275"/>
				</g>

				<!-- left column bottom, cabin, mountains, skateboard -->
				<g transform="translate(0 1770) scale(.3444 .3333)">
					<circle cx="317" cy="122" r="17"/><circle cx="522" cy="150" r="27"/><circle cx="128" cy="245" r="27"/><circle cx="90" cy="410" r="17"/><circle cx="490" cy="262" r="17"/><circle cx="668" cy="178" r="17"/><circle cx="835" cy="102" r="17"/><circle cx="103" cy="530" r="27"/><circle cx="370" cy="567" r="27"/><circle cx="530" cy="582" r="27"/><circle cx="828" cy="555" r="17"/><circle cx="680" cy="915" r="17"/><circle cx="985" cy="920" r="27"/><circle cx="1092" cy="988" r="17"/><circle cx="1303" cy="917" r="17"/><circle cx="1403" cy="905" r="27"/><circle cx="1283" cy="1085" r="27"/><circle cx="450" cy="1140" r="17"/><circle cx="860" cy="1190" r="27"/><circle cx="740" cy="600" r="35"/><circle cx="52" cy="662" r="35"/>
					<circle cx="190" cy="320" r="28"/><circle cx="195" cy="380" r="28"/><circle cx="205" cy="435" r="28"/><circle cx="395" cy="295" r="28"/><circle cx="400" cy="350" r="28"/><circle cx="405" cy="410" r="28"/>
					<path d="M190 240 L280 190 L390 270 M190 290 L370 270 M220 350 L370 330 M225 405 L375 385 M225 460 L380 435 M190 240 L190 210 L250 205 M260 325 L330 315 L335 395 L265 410 Z M210 110 Q230 140 215 150 Q240 170 235 190"/>
					<path d="M385 40 L440 25 L445 80 L470 85 L435 155 L410 110 Z M55 110 L140 65 L160 115 L90 160 Z"/>
					<path d="M435 495 L615 240 L680 340 L770 170 L835 290 M435 495 L1150 495 M550 350 L590 380 L620 310 L650 320 M700 310 L745 285 L760 320 L800 265"/>
					<path d="M810 340 Q800 310 830 300 L970 225 L1140 325 Q1150 360 1120 370 L980 280 L840 365 Q815 365 810 340 Z M875 330 L875 450 M1085 340 L1085 470 M945 350 H1015 V420 H945 Z M980 350 V420 M945 385 H1015 M880 240 L880 200 M920 200 L920 240 M800 490 Q900 440 980 470 Q1060 460 1140 490"/><rect x="870" y="170" width="85" height="32" rx="12"/>
					<path d="M1010 230 Q1060 60 1250 55 Q1450 60 1525 310 M1140 300 Q1210 170 1320 200 Q1380 230 1390 330 M1130 160 L1205 125 M1285 125 L1360 155 M1420 210 L1450 280 M1060 260 L1075 220 M1190 320 L1240 270 L1245 320"/>
					<path d="M180 630 L210 515 L240 520 L220 620 M650 550 Q635 590 650 635 M890 630 Q960 570 1060 630 M1320 560 L1320 625 M1460 560 L1460 625 M1568 590 L1520 630"/>
					<path d="M960 530 L975 560 L1000 540 L985 575 L995 600 L960 590 L930 600 L945 570 L925 545 Z M1160 550 Q1165 590 1190 600 Q1165 610 1160 640 Q1150 610 1115 605 Q1150 595 1160 550 Z"/>
					<path d="M0 800 Q70 770 120 830 Q150 950 80 1100 L0 1125 M80 780 L130 745 M10 850 L40 880 M0 960 L25 1000"/>
					<path d="M235 870 L230 930 L210 1020 L250 1010 L210 1095 L310 1095 L310 1170 L385 1150 L380 1090 L455 1060 L390 980 L380 900 L340 870 M265 930 Q280 960 295 930 M320 1020 Q350 1040 380 1020"/>
					<path d="M470 870 L520 980 L610 925 L570 870 M500 890 L530 960"/>
					<path d="M570 1060 Q680 1040 730 1140 Q720 1170 640 1130 L600 1080 Z M620 1110 L530 1200 M650 1170 L630 1200"/>
					<path d="M110 1115 Q115 1150 160 1160 Q120 1170 110 1200 Q100 1170 60 1160 Q100 1150 110 1115 Z"/>
					<path d="M790 950 Q770 1000 790 1050 L1230 1260 Q1280 1260 1300 1180 Q1300 1130 1230 1100 L880 940 Q830 930 790 950 Z"/>
					<rect x="905" y="1040" width="50" height="65" rx="12" transform="rotate(25 930 1070)"/><rect x="1145" y="1150" width="50" height="65" rx="12" transform="rotate(25 1170 1180)"/>
					<path d="M1340 1040 L1520 915 L1568 945 M1350 1080 L1568 960 M1370 1110 L1440 1180 L1500 1000 L1568 1150 M1170 870 L1200 1035 L1260 1020 L1225 870 M1090 870 L1095 890 L1120 880"/>
					<path d="M140 0 Q200 60 280 40 L390 0 M530 0 L570 60 L610 40 L650 0 M680 0 L700 110 L790 40 L770 0 M850 0 L950 40 L970 110 L1000 60 M1430 10 L1520 20 L1530 170 L1568 130 M0 240 L60 240 L20 380"/>
				</g>
			</g>
			<use href="#tile" y="1918"/>
		</svg>

		<div class="date-chip">3 April 2025</div>
		<button class="scroll-down">
			<svg width="32" height="34" viewBox="0 0 32 34">
				<path d="M3 3 L16 13 L29 3 M3 19 L16 30 L29 19" fill="none" stroke="#a8aeb1" stroke-width="5"/>
			</svg>
		</button>

		<div class="messages">
			<div class="row in row-first">
				<div class="bubble"><div class="line"><span class="text">Sari da</span><span class="meta">3:22 pm</span></div></div>
			</div>

			<div class="row in sticker-in">
				<svg class="sticker" width="110" height="110" viewBox="0 0 112 112">
					<circle cx="56" cy="55" r="55" fill="url(#faceFill)"/>
					<circle cx="20" cy="64" r="22" fill="url(#blush)"/>
					<circle cx="92" cy="64" r="22" fill="url(#blush)"/>
					<path d="M26 50 Q37 23 48 50 Q37 37 26 50 Z M66 50 Q77 23 88 50 Q77 37 66 50 Z" fill="#6b3d10" stroke="#6b3d10" stroke-width="2" stroke-linejoin="round"/>
					<path d="M28 112 Q22 100 29 86 L37 62 Q40 56 44 62 L44 74 L66 58 Q73 54 75 61 L73 66 Q82 64 82 71 L79 76 Q86 77 83 84 L78 88 Q84 92 78 97 L60 105 Q46 114 28 112 Z" fill="url(#handFill)" stroke="#f0a124" stroke-width="1"/>
					<path d="M58 78 L74 66 M62 87 L79 76 M63 96 L78 88" fill="none" stroke="#ef9f1f" stroke-width="2.500"/>
				</svg>
			</div>
			<div class="row in pill-in">
				<div class="time-pill">3:22 pm</div>
			</div>

			<div class="row out sticker-out">
				<svg class="sticker" width="111" height="111" viewBox="0 0 112 112">
					<circle cx="56" cy="56" r="55" fill="url(#faceFill)"/>
					<circle cx="20" cy="62" r="20" fill="url(#blush)"/>
					<circle cx="92" cy="62" r="20" fill="url(#blush)"/>
					<path d="M26 50 Q37 30 48 50 Q37 41 26 50 Z M64 50 Q75 30 86 50 Q75 41 64 50 Z" fill="#5c3a0d" stroke="#5c3a0d" stroke-width="2" stroke-linejoin="round"/>
					<path d="M26 67 Q56 96 86 67 Q56 83 26 67 Z" fill="#5c3a0d" stroke="#5c3a0d" stroke-width="2" stroke-linejoin="round"/>
				</svg>
			</div>
			<div class="row out pill-out">
				<div class="time-pill green">3:25 pm<svg class="tick" width="42" height="28"><use href="#ticks"/></svg></div>
			</div>

			<div class="row in gap-pothum">
				<div class="bubble tail"><div class="line"><span class="text">Pothum pothum</span><span class="meta">3:25 pm</span></div></div>
			</div>
			<div class="row in gap-s">
				<div class="bubble"><div class="line"><span class="text">Romba elikatha</span><span class="meta">3:25 pm</span></div></div>
			</div>

			<div class="row out gap-l">
				<div class="bubble tail"><div class="line tall"><span class="text">aadithan elipen <svg class="inline-emoji first" width="54" height="54"><use href="#grin"/></svg><svg class="inline-emoji" width="54" height="54"><use href="#grin"/></svg>eeee</span><span class="meta">3:26 pm<svg class="tick" width="42" height="28"><use href="#ticks"/></svg></span></div></div>
			</div>

			<div class="row in after-tall">
				<div class="bubble tail"><div class="line"><span class="text">Sari paithiyam dhna new</span><span class="meta">3:27 pm</span></div></div>
			</div>
			<div class="row in gap-s">
				<div class="bubble"><div class="line"><span class="text">Nee apadi dhn elipa</span><span class="meta">3:28 pm</span></div></div>
			</div>

			<div class="row out gap-l">
				<div class="bubble tail"><div class="line"><span class="text">ama un melathan</span><span class="meta">3:56 pm<svg class="tick" width="42" height="28"><use href="#ticks"/></svg></span></div></div>
			</div>

			<div class="row in gap-l">
				<div class="bubble tail"><div class="line"><span class="text">Poda</span><span class="meta">4:56 pm</span></div></div>
			</div>
			<div class="row in gap-s">
				<div class="bubble">
					<div class="quote">
						<div class="quote-name">You</div>
						<div class="quote-text">ama un melathan</div>
					</div>
					<div class="line under-quote"><span class="text">Athu paravala</span><span class="meta">4:56 pm</span></div>
				</div>
			</div>
			<div class="row in gap-enala">
				<div class="bubble"><div class="line"><span class="text">Enala paithiyam agama iruntha sari dhn</span><span class="meta">4:56 pm</span></div></div>
			</div>

			<div class="row out gap-l">
				<div class="bubble tail"><div class="line"><span class="text">ok ok</span><span class="meta">5:14 pm<svg class="tick" width="42" height="28"><use href="#ticks"/></svg></span></div></div>
			</div>
			<div class="row out gap-s">
				<div class="bubble"><div class="line"><span class="text">athu unga kailathan irruku</span><span class="meta">5:14 pm<svg class="tick" width="42" height="28"><use href="#ticks"/></svg></span></div></div>
			</div>

			<div class="row in gap-l">
				<div class="bubble tail"><div class="line"><span class="text">Enoda kai lam yethum ila</span><span class="meta">5:22 pm</span></div></div>
			</div>

			<div class="row out gap-l">
				<div class="bubble tail"><div class="line"><span class="text">haan</span><span class="meta">7:20 pm<svg class="tick" width="42" height="28"><use href="#ticks"/></svg></span></div></div>
			</div>

			<div class="row in gap-l">
				<div class="bubble tail"><div class="line"><span class="text">Ena haan</span><span class="meta">7:20 pm</span></div></div>
			</div>

			<div class="row out gap-l">
				<div class="bubble tail"><div class="line"><span class="text">nalaiku pannikalam</span><span class="meta">7:26 pm<svg class="tick" width="42" height="28"><use href="#ticks"/></svg></span></div></div>
			</div>

			<div class="row in gap-l">
				<div class="bubble tail bubble-cut"><div class="quote"></div></div>
			</div>
		</div>
	</main>
</div>
</body>
</html>
```

FILE: styles.css
```css
* {
	box-sizing: border-box;
}
html, body {
	margin: 0;
	padding: 0;
	background-color: #0a0f13;
}
.defs {
	position: absolute;
}
.phone {
	width: 1080px;
	height: 2412px;
	display: flex;
	flex-direction: column;
	overflow: hidden;
	font-family: Roboto, "Noto Sans", sans-serif;
	background-color: #0a0f13;
}

/* header */
.top {
	position: relative;
	z-index: 3;
	height: 263px;
	flex: none;
	background-color: #0b1014;
	border-bottom: 1px solid #22282b;
}
.statusbar {
	height: 120px;
	padding: 2px 62px 0 45px;
	display: flex;
	align-items: center;
	justify-content: space-between;
}
.clock {
	font-size: 31px;
	font-weight: 500;
	color: #dcdfe0;
}
.status-icons {
	display: flex;
	align-items: center;
}
.ic-wifi {
	margin-right: 11px;
	overflow: visible;
}
.wifi-four {
	font-size: 16px;
	font-weight: 700;
	fill: #e2e4e5;
}
.ic-signal {
	fill: #e2e4e5;
	margin-right: 12px;
}
.ic-signal + .battery {
	margin-left: -6px;
}
.battery {
	font-size: 34px;
	font-weight: 500;
	letter-spacing: 1px;
	color: #dcdfe0;
}
.searchbar {
	height: 122px;
	margin: 0 42px 0 41px;
	border-radius: 61px;
	background-color: #12181c;
	display: flex;
	align-items: center;
}
.back {
	margin-left: 40px;
}
.cursor {
	width: 4px;
	height: 51px;
	margin-left: 38px;
	background-color: #21c063;
}
.placeholder {
	margin-left: -3px;
	padding-top: 2px;
	font-size: 36px;
	color: #9ba1a4;
}
.calendar {
	margin-left: auto;
	margin-right: 30px;
}

/* chat */
.chat {
	position: relative;
	flex: 1;
}
.wallpaper {
	position: absolute;
	left: 0;
	top: 0;
	fill: none;
	stroke: #292e32;
	stroke-width: 6;
}
.doodle-text {
	font-family: Roboto, sans-serif;
	font-weight: 500;
	stroke-width: 5;
}
.messages {
	position: relative;
	display: flex;
	flex-direction: column;
}
.row {
	display: flex;
	flex: none;
}
.row.in {
	justify-content: flex-start;
	padding-left: 44px;
}
.row.out {
	justify-content: flex-end;
	padding-right: 44px;
}
.row-first {
	margin-top: -21.5px;
}
.gap-s {
	margin-top: 4.5px;
}
.gap-l {
	margin-top: 24.5px;
}
.gap-pothum {
	margin-top: 23px;
}
.gap-enala {
	margin-top: 7px;
}
.after-tall {
	margin-top: 26px;
}
.sticker-in {
	margin-top: 37px;
	padding-left: 46px !important;
}
.pill-in {
	margin-top: 15px;
	padding-left: 48px !important;
}
.sticker-out {
	margin-top: 32px;
}
.pill-out {
	margin-top: 13px;
	padding-right: 48px !important;
}

.bubble {
	position: relative;
	border-radius: 26px;
	background-color: #1f272a;
}
.row.out .bubble {
	background-color: #144d37;
}
.bubble.tail {
	border-top-left-radius: 0;
}
.row.out .bubble.tail {
	border-top-left-radius: 26px;
	border-top-right-radius: 0;
}
.bubble.tail::before {
	content: "";
	position: absolute;
	top: 0;
	width: 20px;
	height: 26px;
	background-color: inherit;
}
.row.in .bubble.tail::before {
	left: -19px;
	clip-path: polygon(4px 0, 20px 0, 20px 26px, 0 3px);
}
.row.out .bubble.tail::before {
	right: -19px;
	clip-path: polygon(0 0, 16px 0, 20px 3px, 0 26px);
}
.line {
	display: flex;
	align-items: flex-end;
	padding: 12px 22px 10px 24px;
}
.text {
	font-size: 36.4px;
	line-height: 48px;
	padding-bottom: 8.5px;
	color: #f2f4f4;
	white-space: nowrap;
}
.meta {
	display: flex;
	align-items: center;
	margin-left: 35px;
	font-size: 28px;
	line-height: 30px;
	color: #8f9599;
	white-space: nowrap;
}
.row.out .meta {
	margin-left: 21px;
	margin-bottom: 2px;
	color: #92a99f;
}
.tick {
	margin-left: 8px;
	margin-top: -5px;
	flex: none;
}
.line.tall {
	padding-top: 21px;
}
.line.tall .text {
	padding-bottom: 17px;
}
.inline-emoji {
	margin-top: -12px;
	margin-bottom: -12px;
	vertical-align: -8px;
}
.inline-emoji.first {
	margin-left: 7px;
	margin-right: 3px;
}

/* reply block */
.quote {
	height: 120px;
	margin: 11px 7px 0 8px;
	padding: 19px 0 0 21px;
	border-left: 10px solid #21c063;
	border-radius: 14px;
	background-color: #1c2329;
}
.quote-name {
	font-size: 32px;
	font-weight: 500;
	line-height: 42px;
	color: #8ae0b2;
}
.quote-text {
	font-size: 32px;
	line-height: 42px;
	color: #8a9196;
	white-space: nowrap;
}
.line.under-quote {
	padding-top: 11px;
	padding-bottom: 8.500px;
}
.bubble-cut {
	width: 339px;
}

/* floating bits */
.time-pill {
	display: flex;
	align-items: center;
	height: 68px;
	padding: 0 22px 0 21px;
	border-radius: 34px;
	font-size: 28px;
	color: #a0a6a9;
	background-color: #20272b;
}
.time-pill.green {
	padding-right: 19px;
	color: #92a99f;
	background-color: #144d37;
}
.date-chip {
	position: absolute;
	z-index: 2;
	left: 441px;
	top: -21px;
	width: 197px;
	height: 68px;
	border-radius: 14px;
	font-size: 29px;
	line-height: 72px;
	text-align: center;
	color: #a8adb0;
	background-color: #171d21;
}
.scroll-down {
	position: absolute;
	z-index: 2;
	left: 969px;
	top: 2028px;
	width: 80px;
	height: 80px;
	border: none;
	border-radius: 50%;
	background-color: #31383e;
	display: flex;
	align-items: center;
	justify-content: center;
	padding: 0;
}
```
